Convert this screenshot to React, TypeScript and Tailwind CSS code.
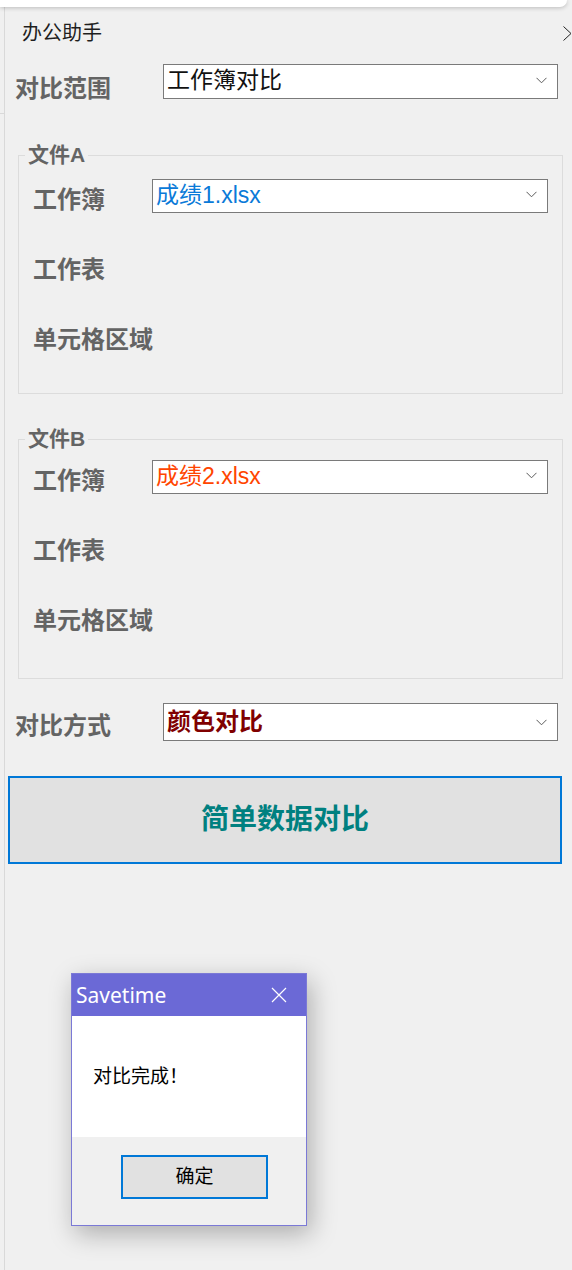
import React from "react";

const LABEL =
  "text-[24px] leading-[32px] font-bold text-[#646464] font-['Liberation_Sans','Noto_Sans_CJK_SC',sans-serif] whitespace-nowrap";

function Chevron() {
  return (
    <svg width="11" height="7" viewBox="0 0 11 7" className="shrink-0">
      <path d="M0.5 0.8 L5.5 5.8 L10.5 0.8" fill="none" stroke="#5a5a5a" strokeWidth="1" />
    </svg>
  );
}

function Select({ className, children }: { className: string; children: React.ReactNode }) {
  return (
    <div
      className={
        "flex items-center justify-between bg-white border border-[#7a7a7a] pl-[3px] pr-[10px] " + className
      }
    >
      {children}
      <Chevron />
    </div>
  );
}

function GroupRow({ label, children }: { label: string; children?: React.ReactNode }) {
  return (
    <div className="h-[70px] flex items-start">
      <div className={"w-[119px] mt-[5px] " + LABEL}>{label}</div>
      {children}
    </div>
  );
}

export default function App() {
  return (
    <div className="relative w-[572px] h-[1270px] overflow-hidden bg-[#f0f0f0] font-['Liberation_Sans','Noto_Sans_CJK_SC',sans-serif]">
      <div className="relative z-10 h-[7px] w-[567px] bg-white rounded-br-[8px] shadow-[0_1px_4px_rgba(0,0,0,0.22)]" />
      <div className="flex h-[1263px]">
        <div className="w-[5px] border-r border-[#d9d9d9] flex flex-col">
          <div className="h-[107px] border-b border-[#d9d9d9]" />
        </div>
        <div className="flex-1 flex flex-col">
          {/* title */}
          <div className="mt-[12px] h-[28px] flex items-center justify-between pl-[17px]">
            <span className="text-[20px] leading-[28px] text-[#1e1e1e]">办公助手</span>
            <svg width="9" height="15" viewBox="0 0 9 15" className="shrink-0">
              <path d="M0.5 0.5 L8 7.5 L0.5 14.5" fill="none" stroke="#222" strokeWidth="1" />
            </svg>
          </div>

          {/* 对比范围 */}
          <div className="mt-[17px] h-[35px] flex items-start pl-[10px]">
            <div className={"w-[148px] mt-[9px] " + LABEL}>对比范围</div>
            <Select className="w-[395px] h-[35px] pb-[3px]">
              <span className="text-[23px] leading-[28px] text-[#111]">工作簿对比</span>
            </Select>
          </div>

          {/* 文件A */}
          <fieldset className="mt-[44px] ml-[13px] w-[545px] border border-[#dcdcdc] p-0 m-0">
            <legend className="ml-[6px] px-[3px] h-[24px] text-[21px] leading-[24px] font-bold text-[#646464]">
              文件A
            </legend>
            <div className="mt-[12px] pl-[14px] pb-[4px]">
              <GroupRow label="工作簿">
                <Select className="w-[396px] h-[34px] pb-[3px]">
                  <span className="text-[23px] leading-[28px] text-[#0a7ad8]">成绩1.xlsx</span>
                </Select>
              </GroupRow>
              <GroupRow label="工作表" />
              <GroupRow label="单元格区域" />
            </div>
          </fieldset>

          {/* 文件B */}
          <fieldset className="mt-[33px] ml-[13px] w-[545px] border border-[#dcdcdc] p-0 m-0">
            <legend className="ml-[6px] px-[3px] h-[24px] text-[21px] leading-[24px] font-bold text-[#646464]">
              文件B
            </legend>
            <div className="mt-[9px] pl-[14px] pb-[8px]">
              <GroupRow label="工作簿">
                <Select className="w-[396px] h-[34px] pb-[3px]">
                  <span className="text-[23px] leading-[28px] text-[#ff4500]">成绩2.xlsx</span>
                </Select>
              </GroupRow>
              <GroupRow label="工作表" />
              <GroupRow label="单元格区域" />
            </div>
          </fieldset>

          {/* 对比方式 */}
          <div className="mt-[24px] h-[38px] flex items-start pl-[10px]">
            <div className={"w-[148px] mt-[7px] " + LABEL}>对比方式</div>
            <Select className="w-[395px] h-[38px]">
              <span className="text-[24px] leading-[30px] font-bold text-[#800000]">颜色对比</span>
            </Select>
          </div>

          {/* big button */}
          <button className="mt-[35px] ml-[3px] w-[554px] h-[88px] border-2 border-[#0078d7] bg-[#e1e1e1] flex items-center justify-center">
            <span className="text-[28px] leading-[36px] font-bold text-[#008080]">简单数据对比</span>
          </button>
        </div>
      </div>

      {/* dialog */}
      <div className="absolute left-[71px] top-[973px] w-[236px] h-[253px] border border-[#7b79d6] bg-[#f0f0f0] flex flex-col shadow-[4px_8px_24px_rgba(0,0,0,0.28)]">
        <div className="h-[42px] bg-[#6b69d6] flex items-center justify-between pl-[4px] pr-[19px]">
          <span className="text-[21px] leading-[26px] text-white font-['Noto_Sans',sans-serif]">Savetime</span>
          <svg width="16" height="16" viewBox="0 0 16 16">
            <path d="M1 1 L15 15 M15 1 L1 15" stroke="#ffffff" strokeWidth="1.2" fill="none" />
          </svg>
        </div>
        <div className="h-[121px] bg-white flex items-center pl-[21px]">
          <span className="text-[19px] leading-[24px] text-black">对比完成！</span>
        </div>
        <div className="flex-1 pt-[18px] pl-[49px]">
          <button className="w-[147px] h-[44px] border-2 border-[#0078d7] bg-[#e1e1e1] flex items-center justify-center">
            <span className="text-[19px] leading-[24px] text-black">确定</span>
          </button>
        </div>
      </div>
    </div>
  );
}
